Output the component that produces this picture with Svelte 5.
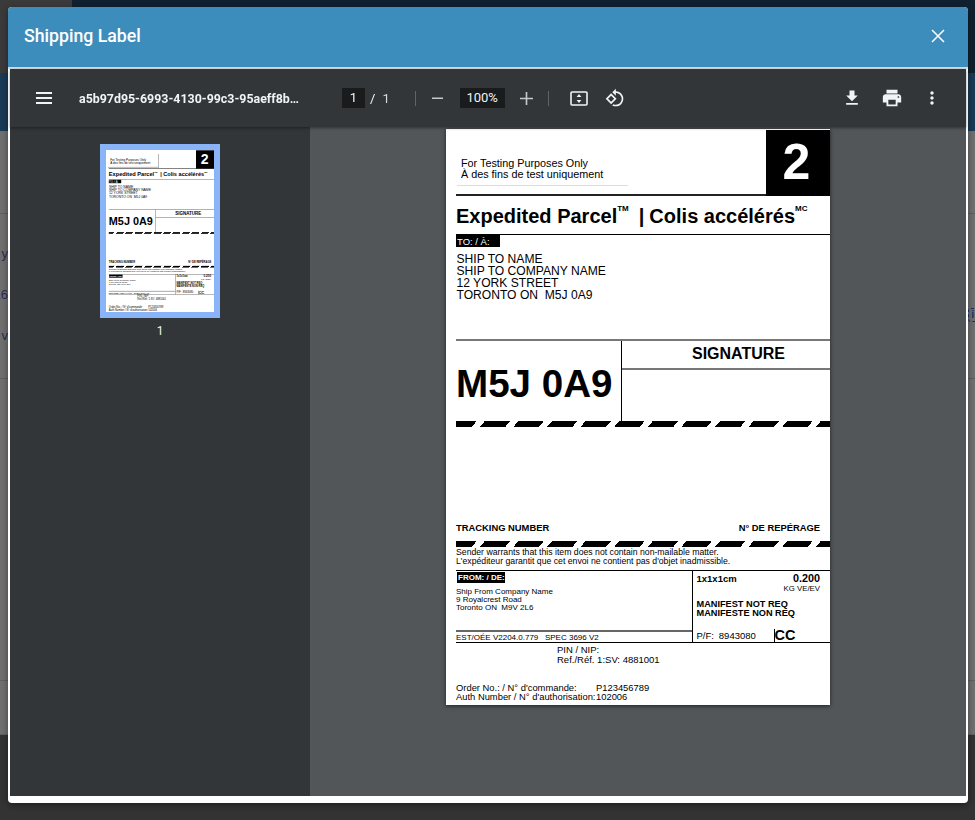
<script lang="ts">
	const fileName = 'a5b97d95-6993-4130-99c3-95aeff8b…';
	const shipTo = ['SHIP TO NAME', 'SHIP TO COMPANY NAME', '12 YORK STREET', 'TORONTO ON  M5J 0A9'];
	const shipFrom = ['Ship From Company Name', '9 Royalcrest Road', 'Toronto ON  M9V 2L6'];
</script>

{#snippet label()}
	<div class="label">
		<div class="l-top">
			<div class="l-test">
				<p>For Testing Purposes Only</p>
				<p>À des fins de test uniquement</p>
			</div>
			<div class="l-zone">2</div>
		</div>
		<div class="l-title">
			Expedited Parcel<sup>TM</sup><span class="bar">|</span>Colis accélérés<sup>MC</sup>
		</div>
		<div class="l-to">
			<span class="tag">TO: / À:</span>
			<div class="addr">
				{#each shipTo as line}
					<p>{line}</p>
				{/each}
			</div>
		</div>
		<div class="l-postal">
			<div class="code">M5J 0A9</div>
			<div class="sig"><div class="sig-head">SIGNATURE</div></div>
		</div>
		<div class="stripe"></div>
		<div class="l-track">
			<span>TRACKING NUMBER</span>
			<span>N° DE REPÉRAGE</span>
		</div>
		<div class="stripe"></div>
		<div class="l-warrant">
			<p>Sender warrants that this item does not contain non-mailable matter.</p>
			<p>L'expéditeur garantit que cet envoi ne contient pas d'objet inadmissible.</p>
		</div>
		<div class="l-ship">
			<div class="from">
				<div class="from-main">
					<span class="from-tag">FROM: / DE:</span>
					<div class="from-addr">
						{#each shipFrom as line}
							<p>{line}</p>
						{/each}
					</div>
				</div>
				<div class="est">EST/OÉE V2204.0.779&nbsp;&nbsp; SPEC 3696 V2</div>
			</div>
			<div class="svc">
				<div class="svc-head">
					<span class="dims">1x1x1cm</span>
					<div class="weight">
						<strong>0.200</strong>
						<span>KG VE/EV</span>
					</div>
				</div>
				<div class="manifest">
					<p>MANIFEST NOT REQ</p>
					<p>MANIFESTE NON REQ</p>
				</div>
				<div class="pf">
					<span class="pf-num">P/F:&nbsp;&nbsp; 8943080</span>
					<span class="cc">CC</span>
				</div>
			</div>
		</div>
		<div class="l-ref">
			<p>PIN / NIP:</p>
			<p>Ref./Réf. 1:SV: 4881001</p>
		</div>
		<div class="l-order">
			<div><span>Order No.: / N° d'commande:</span><span>P123456789</span></div>
			<div><span>Auth Number / N° d'authorisation:</span><span>102006</span></div>
		</div>
	</div>
{/snippet}

<div class="backdrop">
	<div class="b-nav">
		<div class="b-brand"></div>
		<div class="b-navy"></div>
	</div>
	<div class="b-sub"></div>
	<div class="b-row short"></div>
	<div class="b-row tall">
		<span>y</span>
		<span>L6</span>
		<span>v</span>
	</div>
	<div class="b-row huge"></div>
	<div class="b-row last"></div>
	<div class="b-foot"></div>
</div>

<div class="info-mark">i</div>

<div class="modal">
	<header class="m-head">
		<h4>Shipping Label</h4>
		<button class="close" type="button" aria-label="Close">
			<svg viewBox="0 0 14 14" width="14" height="14"><path d="M1 1l12 12M13 1L1 13" stroke="#fff" stroke-width="1.5" fill="none" /></svg>
		</button>
	</header>
	<div class="viewer">
		<div class="toolbar">
			<div class="tb-left">
				<svg class="menu" viewBox="0 0 16 12" width="16" height="12"><path d="M0 0h16v2H0zM0 5h16v2H0zM0 10h16v2H0z" fill="#f1f3f4" /></svg>
				<span class="file">{fileName}</span>
			</div>
			<div class="tb-mid">
				<span class="num-box">1</span>
				<span class="slash">/</span>
				<span class="total">1</span>
				<span class="div"></span>
				<svg class="minus" viewBox="0 0 11 11" width="11" height="11"><path d="M0 4.5h11v1.5H0z" fill="#c6c8ca" /></svg>
				<span class="zoom-box">100%</span>
				<svg class="plus" viewBox="0 0 12 12" width="13" height="13"><path d="M0 5.25h12v1.5H0zM5.25 0h1.5v12h-1.5z" fill="#c6c8ca" /></svg>
				<span class="div second"></span>
				<svg class="fit" viewBox="0 0 18 15" width="18" height="15">
					<rect x="1" y="1" width="16" height="13" rx="1" fill="none" stroke="#f1f3f4" stroke-width="1.6" />
					<path d="M9 3l2.4 3H6.6zM9 12l2.4-3H6.6z" fill="#f1f3f4" />
				</svg>
				<svg class="rotate" viewBox="0 0 24 24" width="20" height="20"><path fill="#f1f3f4" d="M7.34 6.41L.86 12.9l6.49 6.48 6.49-6.48-6.5-6.49zM3.69 12.9l3.66-3.66L11 12.9l-3.66 3.66-3.65-3.66zm15.67-6.26C17.61 4.88 15.3 4 13 4V.76L8.76 5 13 9.24V6c1.79 0 3.58.68 4.95 2.05 2.73 2.73 2.73 7.17 0 9.9C16.58 19.32 14.79 20 13 20c-.97 0-1.94-.21-2.84-.61l-1.49 1.49C10.02 21.62 11.51 22 13 22c2.3 0 4.61-.88 6.36-2.64 3.52-3.51 3.52-9.21 0-12.72z" /></svg>
			</div>
			<div class="tb-right">
				<span class="slot"><svg viewBox="0 0 24 24" width="20" height="20"><path fill="#f1f3f4" d="M19 9h-4V3H9v6H5l7 7 7-7zM5 18v2h14v-2H5z" /></svg></span>
				<span class="slot"><svg viewBox="0 0 24 24" width="22" height="22"><path fill="#f1f3f4" d="M19 8H5c-1.66 0-3 1.34-3 3v6h4v4h12v-4h4v-6c0-1.66-1.34-3-3-3zm-3 11H8v-5h8v5zm3-7c-.55 0-1-.45-1-1s.45-1 1-1 1 .45 1 1-.45 1-1 1zm-1-9H6v4h12V3z" /></svg></span>
				<span class="slot"><svg viewBox="0 0 24 24" width="20" height="20"><path fill="#f1f3f4" d="M12 8c1.1 0 2-.9 2-2s-.9-2-2-2-2 .9-2 2 .9 2 2 2zm0 2c-1.1 0-2 .9-2 2s.9 2 2 2 2-.9 2-2-.9-2-2-2zm0 6c-1.1 0-2 .9-2 2s.9 2 2 2 2-.9 2-2-.9-2-2-2z" /></svg></span>
			</div>
		</div>
		<div class="v-body">
			<aside class="side">
				<div class="thumb">
					<div class="thumb-inner">
						{@render label()}
					</div>
				</div>
				<span class="thumb-num">1</span>
			</aside>
			<main class="stage">
				<div class="sheet">
					{@render label()}
				</div>
			</main>
		</div>
	</div>
</div>

<style>
	:global(body) {
		background: #333;
		overflow: hidden;
	}

	p {
		margin: 0;
	}

	.backdrop {
		background: #6f6f6f;
		display: flex;
		flex-direction: column;
		height: 820px;
		overflow: hidden;
		font-family: 'Liberation Sans', sans-serif;
	}

	.b-nav {
		display: flex;
		flex: none;
		height: 73px;
	}

	.b-brand {
		background: #3a3a3a;
		width: 72px;
	}

	.b-navy {
		background: #0f2130;
		flex: 1;
	}

	.b-sub {
		background: #1a3a55;
		flex: none;
		height: 58px;
	}

	.b-row {
		border-bottom: 1px solid #5f5f5f;
		flex: none;
	}

	.short {
		height: 82px;
	}

	.tall {
		color: #2b2b55;
		display: flex;
		flex-direction: column;
		font-size: 13px;
		gap: 25px;
		height: 165px;
		padding-top: 32px;
		box-sizing: border-box;
	}

	.tall span {
		line-height: 16px;
		margin-left: -32px;
		text-align: right;
		width: 40px;
	}

	.huge {
		height: 301px;
	}

	.last {
		height: 53px;
	}

	.b-foot {
		background: #333;
		flex: 1;
	}

	.info-mark {
		border: 1px dashed #1c2f6b;
		border-radius: 3px;
		color: #1c2f6b;
		font: 700 10px/12px 'Liberation Sans', sans-serif;
		height: 12px;
		left: 968px;
		position: fixed;
		text-align: center;
		top: 308px;
		width: 8px;
	}

	.modal {
		background: #fff;
		border-radius: 4px;
		box-shadow: 0 2px 6px rgba(0, 0, 0, 0.4);
		display: flex;
		flex-direction: column;
		height: 796px;
		left: 8px;
		overflow: hidden;
		position: fixed;
		top: 7px;
		width: 960px;
	}

	.m-head {
		align-items: center;
		background: #3c8dbc;
		border-bottom: 2px solid #d8dde0;
		color: #fff;
		display: flex;
		flex: none;
		height: 62px;
		justify-content: space-between;
		box-sizing: border-box;
		padding: 0 23px 2px 16px;
	}

	.m-head h4 {
		font: 500 17.7px/24px Roboto, sans-serif;
		margin: 0;
	}

	.close {
		background: none;
		border: 0;
		display: flex;
		padding: 0;
	}

	.viewer {
		display: flex;
		flex: none;
		flex-direction: column;
		height: 727px;
		margin: 0 2px 0 2px;
	}

	.toolbar {
		align-items: center;
		background: #323639;
		box-shadow: 0 1px 3px rgba(0, 0, 0, 0.4);
		color: #f1f3f4;
		display: flex;
		flex: none;
		font-family: Roboto, sans-serif;
		height: 58px;
		box-sizing: border-box;
		position: relative;
	}

	.tb-left {
		align-items: center;
		display: flex;
		flex: none;
		width: 332px;
	}

	.menu {
		margin-left: 26px;
	}

	.file {
		font-size: 12.4px;
		font-weight: 700;
		margin-left: 27px;
		white-space: nowrap;
	}

	.tb-mid {
		align-items: center;
		display: flex;
		font-size: 13px;
	}

	.num-box {
		background: #191b1c;
		height: 20px;
		line-height: 20px;
		text-align: center;
		width: 23px;
	}

	.slash {
		margin-left: 5px;
	}

	.total {
		color: #d8dadb;
		margin-left: 7px;
	}

	.div {
		background: #5f6366;
		height: 15px;
		margin-left: 25px;
		width: 1px;
	}

	.minus {
		margin-left: 16px;
	}

	.zoom-box {
		background: #191b1c;
		height: 20px;
		line-height: 20px;
		margin-left: 17px;
		text-align: center;
		width: 45px;
	}

	.plus {
		margin-left: 15px;
	}

	.div.second {
		margin-left: 15px;
	}

	.fit {
		margin-left: 21px;
	}

	.rotate {
		margin-left: 17px;
	}

	.tb-right {
		align-items: center;
		display: flex;
		margin-left: auto;
		margin-right: 14px;
	}

	.slot {
		align-items: center;
		display: flex;
		justify-content: center;
		width: 40px;
	}

	.v-body {
		display: flex;
		flex: 1;
		min-height: 0;
	}

	.side {
		align-items: center;
		background: #323639;
		display: flex;
		flex: none;
		flex-direction: column;
		padding-top: 17px;
		width: 300px;
		box-sizing: border-box;
	}

	.thumb {
		background: #fff;
		border: 6px solid #8ab4f8;
		height: 162px;
		overflow: hidden;
		width: 108px;
	}

	.thumb-inner {
		transform: scale(0.28125);
		transform-origin: top left;
		width: 384px;
	}

	.thumb-inner .l-test::after {
		background: none;
		border-bottom: 3px solid #aaa;
		border-right: 3px solid #aaa;
		bottom: auto;
		height: 46px;
		left: -3px;
		top: 14px;
		width: 178px;
	}

	.thumb-num {
		color: #f1f3f4;
		font: 400 12px/14px Roboto, sans-serif;
		margin-top: 6px;
	}

	.stage {
		background: #525659;
		flex: 1;
		padding: 2px 0 0 136px;
	}

	.sheet {
		background: #fff;
		box-shadow: 0 1px 4px rgba(0, 0, 0, 0.6);
		width: 384px;
	}

	.label {
		background: #fff;
		box-sizing: border-box;
		color: #000;
		display: flex;
		flex-direction: column;
		font-family: 'Liberation Sans', Arial, sans-serif;
		height: 576px;
		padding-left: 10px;
		width: 384px;
	}

	.l-top {
		display: flex;
		flex: none;
		height: 67px;
		justify-content: space-between;
	}

	.l-test {
		border-bottom: 2px solid #222;
		flex: 1;
		font-size: 10.8px;
		line-height: 11px;
		padding: 29px 0 0 5px;
		position: relative;
		box-sizing: border-box;
	}

	.l-test::after {
		background: #ddd;
		bottom: 8px;
		content: '';
		height: 1px;
		left: 1px;
		position: absolute;
		width: 171px;
	}

	.l-zone {
		background: #000;
		box-sizing: border-box;
		color: #fff;
		flex: none;
		font-size: 50px;
		font-weight: 700;
		height: 66px;
		line-height: 65px;
		margin-top: 1px;
		padding-right: 3px;
		text-align: center;
		width: 64px;
	}

	.l-title {
		border-bottom: 1px solid #000;
		box-sizing: border-box;
		flex: none;
		font-size: 20px;
		font-weight: 700;
		height: 38.5px;
		line-height: 41px;
		white-space: nowrap;
	}

	.l-title sup {
		font-size: 8px;
		line-height: 0;
		vertical-align: 12px;
	}

	.bar {
		margin: 0 5px 0 10px;
	}

	.l-to {
		flex: none;
		height: 106.5px;
		border-bottom: 2px solid #777;
		box-sizing: border-box;
	}

	.tag {
		background: #000;
		color: #fff;
		display: block;
		font-size: 9.5px;
		height: 12px;
		line-height: 13px;
		padding-left: 1px;
		box-sizing: border-box;
		width: 44px;
	}

	.addr {
		font-size: 12.1px;
		line-height: 12px;
		margin-top: 6px;
		padding-left: 0.5px;
		white-space: pre;
	}

	.l-postal {
		display: flex;
		flex: none;
		height: 80px;
	}

	.code {
		flex: none;
		font-size: 38.6px;
		font-weight: 700;
		line-height: 86px;
		width: 165px;
		box-sizing: border-box;
	}

	.sig {
		border-left: 1px solid #000;
		flex: 1;
	}

	.sig-head {
		border-bottom: 2px solid #777;
		box-sizing: border-box;
		font-size: 16px;
		font-weight: 700;
		height: 29px;
		line-height: 26px;
		padding-left: 25px;
		text-align: center;
	}

	.stripe {
		background: repeating-linear-gradient(130deg, #000 -3.7px, #000 15.8px, #fff 15.8px, #fff 22.04px);
		flex: none;
		height: 6px;
	}

	.l-track {
		display: flex;
		flex: none;
		font-size: 9.4px;
		font-weight: 700;
		height: 114px;
		align-items: flex-end;
		justify-content: space-between;
		box-sizing: border-box;
		padding: 0 10px 8px 0;
	}

	.l-warrant {
		border-bottom: 1px solid #000;
		box-sizing: border-box;
		flex: none;
		font-size: 8.7px;
		height: 24px;
		line-height: 9px;
		padding-top: 1px;
		white-space: nowrap;
	}

	.l-ship {
		border-bottom: 1px solid #000;
		display: flex;
		flex: none;
		height: 72px;
		box-sizing: border-box;
	}

	.from {
		display: flex;
		flex: none;
		flex-direction: column;
		width: 235.5px;
	}

	.from-main {
		border-bottom: 2px solid #666;
		flex: none;
		height: 61px;
		box-sizing: border-box;
	}

	.from-tag {
		background: #000;
		color: #fff;
		display: block;
		font-size: 8px;
		font-weight: 700;
		height: 11px;
		line-height: 11px;
		margin: 1px 0 0 1px;
		padding-left: 1px;
		box-sizing: border-box;
		width: 48px;
	}

	.from-addr {
		font-size: 8px;
		line-height: 8px;
		margin-top: 5px;
		white-space: pre;
	}

	.est {
		font-size: 8px;
		line-height: 9px;
		padding-top: 1px;
		white-space: nowrap;
	}

	.svc {
		border-left: 1px solid #000;
		display: flex;
		flex: 1;
		flex-direction: column;
		padding-left: 4px;
	}

	.svc-head {
		display: flex;
		flex: none;
		height: 25px;
		justify-content: space-between;
		padding: 2px 10px 0 0;
	}

	.dims {
		font-size: 9.5px;
		font-weight: 700;
		line-height: 12px;
	}

	.weight {
		display: flex;
		flex-direction: column;
		align-items: flex-end;
		font-size: 7.8px;
		line-height: 9px;
	}

	.weight strong {
		font-size: 10.8px;
		line-height: 11px;
	}

	.manifest {
		flex: none;
		font-size: 9.2px;
		font-weight: 700;
		height: 31px;
		line-height: 9px;
		padding-top: 2px;
		box-sizing: border-box;
	}

	.pf {
		align-items: flex-end;
		display: flex;
		flex: 1;
		font-size: 9.5px;
	}

	.pf-num {
		line-height: 14px;
		width: 77px;
		white-space: nowrap;
		word-spacing: -1px;
	}

	.cc {
		border-left: 1px solid #000;
		font-size: 14.5px;
		font-weight: 700;
		height: 14px;
		line-height: 12px;
	}

	.l-ref {
		flex: none;
		font-size: 9.5px;
		height: 33px;
		line-height: 10px;
		padding: 2px 0 0 101px;
		box-sizing: border-box;
	}

	.l-order {
		flex: none;
		font-size: 9.4px;
		line-height: 9.3px;
		padding-top: 7px;
	}

	.l-order div {
		display: flex;
		white-space: nowrap;
	}

	.l-order span:first-child {
		width: 140px;
		flex: none;
	}
</style>
